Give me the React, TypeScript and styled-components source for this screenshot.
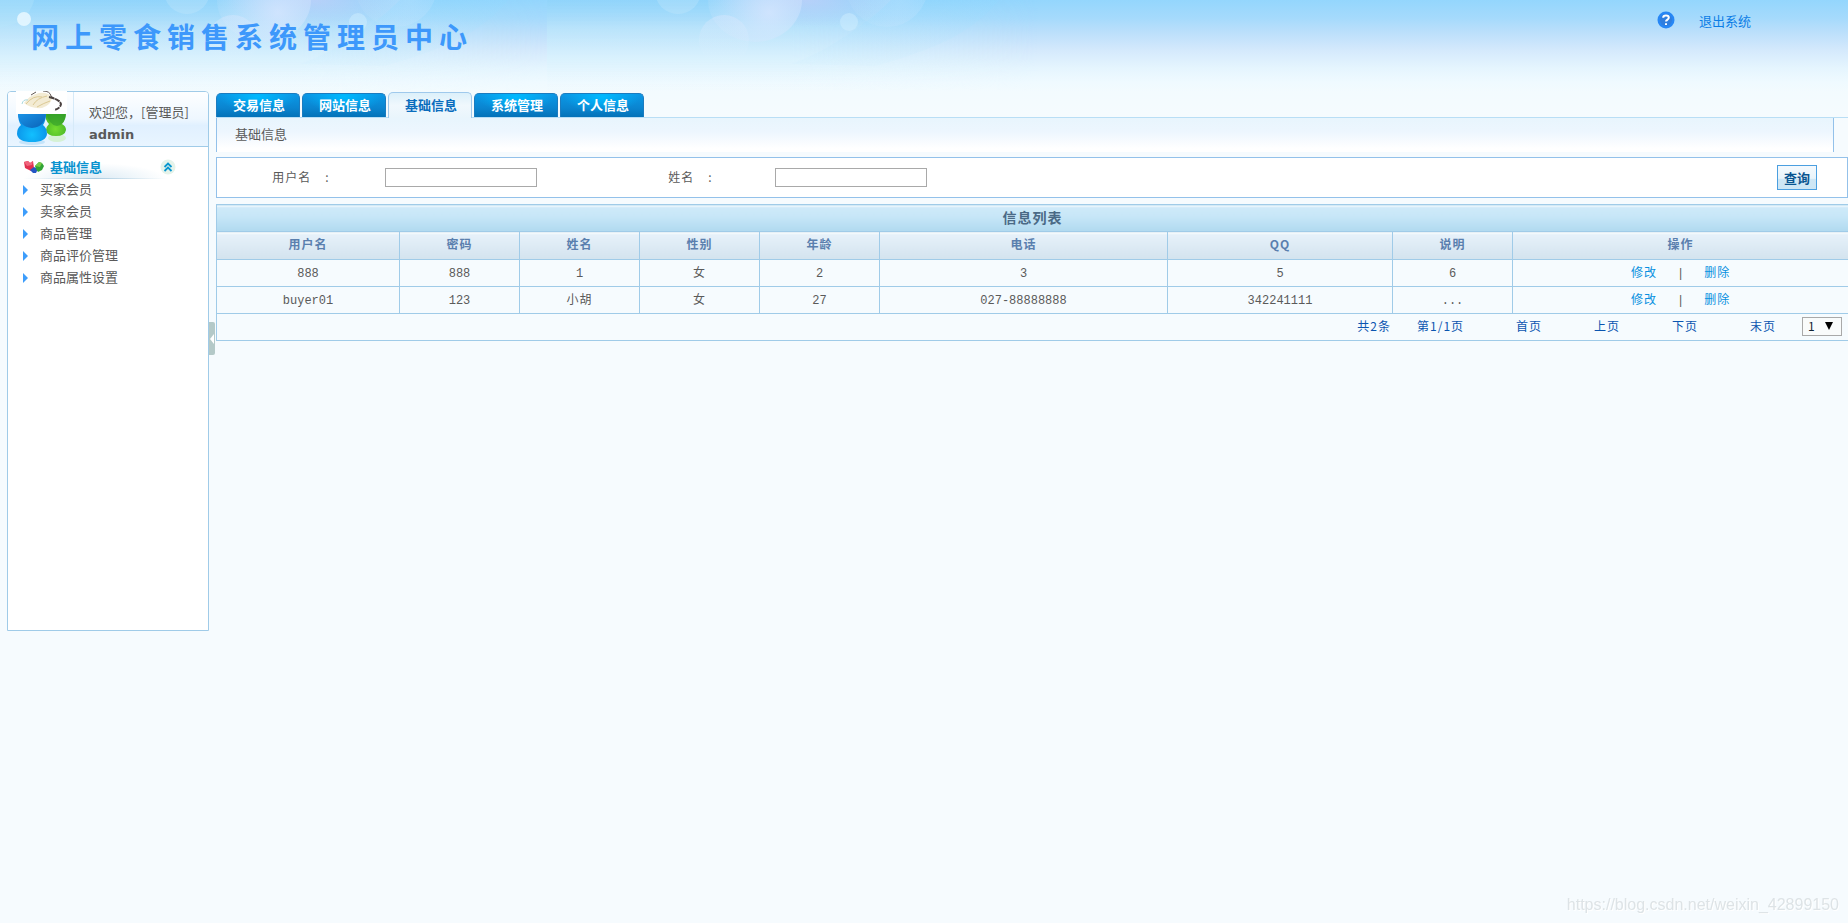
import React from "react";
import styled, { createGlobalStyle } from "styled-components";

const line = "#a0cbe8";
const edge = "#93c1ea";

const GlobalStyle = createGlobalStyle`
  *, *::before, *::after { box-sizing: border-box; }
  body {
    margin: 0;
    background: #f6fbfe;
    color: #5a5a5a;
    font: 12px/18px "Noto Sans CJK SC", sans-serif;
  }
  button, input, select { font: inherit; color: inherit; margin: 0; }
  a { text-decoration: none; color: inherit; }
  ul { list-style: none; margin: 0; padding: 0; }
`;

const Page = styled.div`
  min-height: 100vh;
  background: linear-gradient(180deg, #94d6fd 0, #a5dafc 18px, #bbdffb 32px, #d4e9fc 50px, #e5f5fe 68px, #effaff 82px, #f3fbfe 92px, #f6fbfe 124px) no-repeat;
`;

const Header = styled.header`
  position: relative;
  display: flex;
  justify-content: space-between;
  align-items: flex-start;
  height: 91px;
  padding: 8px 97px 0 31px;
  overflow: hidden;
`;

const Backdrop = styled.svg`
  position: absolute;
  left: 0;
  top: 0;
`;

const SiteTitle = styled.h1`
  position: relative;
  margin: 8px 0 0;
  font-size: 28px;
  line-height: 40px;
  font-weight: 700;
  letter-spacing: 6px;
  color: #3d98fb;
`;

const HeaderLinks = styled.nav`
  position: relative;
  display: flex;
  align-items: flex-start;
  gap: 24px;
  font-size: 13px;
  line-height: 26px;
  color: #0a7de6;
  svg { display: block; margin-top: 3px; }
`;

const Body = styled.div`
  display: flex;
  align-items: flex-start;
  padding-left: 7px;
`;

const Sidebar = styled.aside`
  width: 202px;
  min-height: 540px;
  flex: none;
  border: 1px solid ${line};
  border-radius: 4px 4px 0 0;
  background: #fff;
  font-size: 13px;
`;

const Welcome = styled.div`
  display: flex;
  height: 55px;
  border-bottom: 1px solid ${line};
  border-radius: 3px 3px 0 0;
  padding-left: 8px;
  background: linear-gradient(180deg, #fdfeff, #eef7ff 50%, #e0f0ff 62%, #e9f5ff);
  svg { margin-top: -1px; }
`;

const WelcomeText = styled.div`
  margin-left: 6px;
  padding: 10px 0 0 15px;
  border-left: 1px solid #d6eaf8;
  line-height: 20px;
  white-space: nowrap;
  strong { display: block; font-family: "DejaVu Sans", sans-serif; font-size: 13px; line-height: 26px; }
`;

const MenuHead = styled.div`
  display: flex;
  align-items: center;
  height: 24px;
  margin: 8px 32px 0 15px;
  color: #0a93cf;
  background:
    linear-gradient(90deg, #fff, #a9cbe0 50%, #fff) bottom left / 144px 1px no-repeat,
    radial-gradient(ellipse at 50% 100%, #dcebf5, #ffffff00 70%) bottom left / 144px 16px no-repeat;
  h2 { flex: 1; margin: 0 0 0 5px; font-size: 13px; line-height: 22px; }
`;

const Collapse = styled.button`
  display: flex;
  border: 0;
  padding: 0;
  background: none;
`;

const MenuList = styled.ul`
  margin-top: -1px;
`;

const MenuLink = styled.a`
  display: flex;
  align-items: center;
  gap: 11px;
  padding-left: 15px;
  line-height: 22px;
  svg { position: relative; top: 1px; }
`;

const Handle = styled.button`
  flex: none;
  width: 6px;
  height: 33px;
  margin: 231px 1px 0 0;
  padding: 0;
  border: 0;
  border-radius: 0 2px 2px 0;
  background: #b4c9c8;
  svg { display: block; }
`;

const Main = styled.main`
  flex: 1;
  min-width: 0;
`;

const Tabs = styled.nav`
  display: flex;
  align-items: flex-end;
  gap: 2px;
  height: 27px;
  border-bottom: 1px solid #b9def5;
`;

const Tab = styled.a<{ $active?: boolean }>`
  width: 84px;
  height: ${(p) => (p.$active ? 26 : 24)}px;
  margin-bottom: ${(p) => (p.$active ? -1 : 0)}px;
  padding-left: 2px;
  border: 1px solid ${(p) => (p.$active ? "#9fc9ec" : "#1b7cc0")};
  border-bottom: 0;
  border-radius: 5px 5px 0 0;
  background: ${(p) =>
    p.$active
      ? "linear-gradient(180deg, #dcf0fa, #f0f8fd 50%, #e9f5fc)"
      : "radial-gradient(ellipse 38px 16px at 50% 12%, #00baff, #00baff00), linear-gradient(180deg, #0b98e6, #0a85d0 60%, #0472b8)"};
  color: ${(p) => (p.$active ? "#0a6dbd" : "#fff")};
  font-size: 13px;
  font-weight: 700;
  line-height: ${(p) => (p.$active ? 23 : 21)}px;
  text-align: center;
`;

const Crumb = styled.div`
  height: 34px;
  margin-right: 14px;
  padding-left: 18px;
  border: solid ${edge};
  border-width: 0 1px;
  background: linear-gradient(180deg, #e8f5fd, #edf6fe 40%, #fff 90%);
  font-size: 13px;
  line-height: 32px;
`;

const Search = styled.form`
  display: grid;
  grid-template-columns: 168px 221px 169px 1fr auto;
  align-items: center;
  height: 41px;
  margin: 5px 0 6px;
  padding-right: 30px;
  border: 1px solid ${edge};
  background: #fff;
`;

const FieldLabel = styled.label`
  padding-bottom: 2px;
  text-align: center;
  letter-spacing: 1px;
  span { margin-left: 14px; }
`;

const TextBox = styled.input`
  width: 152px;
  height: 19px;
  padding: 0 2px;
  border: 1px solid #a9a9a9;
  border-radius: 0;
  background: #fff;
`;

const QueryButton = styled.button`
  width: 40px;
  height: 25px;
  padding: 0;
  border: 1px solid #4b9fe0;
  background: linear-gradient(180deg, #f4f9fd, #e9f4fa 54%, #cfe7f5 56%, #cde6f5);
  color: #0a5590;
  font-size: 13px;
  font-weight: 700;
  line-height: 20px;
`;

const Grid = styled.table`
  width: 100%;
  table-layout: fixed;
  border-collapse: collapse;
  border: 1px solid ${line};
  text-align: center;
  th, td { border: 1px solid ${line}; padding: 0; height: 27px; }
`;

const TitleCell = styled.th`
  && { padding-bottom: 2px; }
  background: linear-gradient(180deg, #fff 0, #cfeaf9 2px, #c6e6f7 45%, #b0d9ef);
  color: #4a6a86;
  font-size: 14px;
  letter-spacing: 1px;
`;

const HeadCell = styled.th`
  && { height: 28px; padding-bottom: 3px; }
  background: linear-gradient(180deg, #fff 0, #e6f1fa 2px, #d3e3ee);
  color: #5a7fae;
  letter-spacing: 1px;
`;

const Cell = styled.td<{ $han?: boolean }>`
  && { padding-top: 2px; }
  font-family: "Liberation Mono", "Noto Sans CJK SC", monospace;
  letter-spacing: ${(p) => (p.$han ? "1px" : "normal")};
`;

const Actions = styled.div`
  display: flex;
  justify-content: center;
  gap: 20px;
  a { color: #0790e0; letter-spacing: 1px; }
`;

const Pager = styled.div`
  display: flex;
  align-items: center;
  justify-content: flex-end;
  gap: 26px;
  padding: 0 6px 2px 0;
  color: #0b55b0;
  letter-spacing: 1px;
`;

const PageLinks = styled.nav`
  display: flex;
  gap: 52px;
  margin-left: 26px;
`;

const PagePick = styled.span`
  position: relative;
  display: flex;
  svg { position: absolute; right: 9px; top: 5px; pointer-events: none; }
`;

const PageSelect = styled.select`
  appearance: none;
  width: 40px;
  height: 19px;
  padding: 0 0 0 5px;
  border: 1px solid #a9a9a9;
  border-radius: 0;
  background: #f9fbfb;
  color: #123;
  line-height: 16px;
`;

const Watermark = styled.div`
  position: fixed;
  right: 9px;
  bottom: 8px;
  font: 16px/20px "Liberation Sans", sans-serif;
  color: #dde3e6;
  text-shadow: 1px 1px 0 #fff;
`;

const menu = ["买家会员", "卖家会员", "商品管理", "商品评价管理", "商品属性设置"];
const tabs = ["交易信息", "网站信息", "基础信息", "系统管理", "个人信息"];
const columns: [string, number][] = [
  ["用户名", 183], ["密码", 120], ["姓名", 120], ["性别", 120], ["年龄", 120],
  ["电话", 288], ["QQ", 225], ["说明", 120], ["操作", 336],
];
const rows = [
  ["888", "888", "1", "女", "2", "3", "5", "6"],
  ["buyer01", "123", "小胡", "女", "27", "027-88888888", "342241111", "..."],
];

const Bubbles = () => (
  <g>
    <circle cx="187" cy="-9" r="23" fill="#fff" opacity=".14" />
    <ellipse cx="264" cy="0" rx="47" ry="42" fill="url(#orb)" />
    <circle cx="233" cy="40" r="25" fill="url(#soft)" />
    <circle cx="358" cy="22" r="9" fill="#d3f0ff" opacity=".45" />
    <circle cx="396" cy="-14" r="41" fill="url(#orb)" opacity=".5" />
    <path d="M508 0C480 35 440 50 385 66L300 64C340 50 380 20 400 0Z" fill="url(#beam)" />
  </g>
);

const HeaderArt = () => (
  <Backdrop width="1040" height="91" aria-hidden="true">
    <defs>
      <radialGradient id="orb" cx=".65" cy=".65" r=".65">
        <stop offset="0" stopColor="#dbe8ff" stopOpacity=".75" />
        <stop offset="1" stopColor="#d0e6fc" stopOpacity=".15" />
      </radialGradient>
      <linearGradient id="soft" x1="0" y1="0" x2="0" y2="1">
        <stop offset="0" stopColor="#dde8fd" stopOpacity=".4" />
        <stop offset="1" stopColor="#dff2fd" stopOpacity="0" />
      </linearGradient>
      <linearGradient id="beam" x1="0" y1="0" x2="0" y2="1">
        <stop offset="0" stopColor="#8fd8ff" stopOpacity=".3" />
        <stop offset="1" stopColor="#c4eafe" stopOpacity=".1" />
      </linearGradient>
      <linearGradient id="aqua" x1="0" y1="0" x2="0" y2="1">
        <stop offset="0" stopColor="#8cd2f8" stopOpacity=".4" />
        <stop offset=".3" stopColor="#b9e4fb" stopOpacity=".8" />
        <stop offset=".65" stopColor="#d9f2fd" stopOpacity=".8" />
        <stop offset="1" stopColor="#effaff" stopOpacity="0" />
      </linearGradient>
      <radialGradient id="lilac">
        <stop offset="0" stopColor="#c3cff8" stopOpacity=".75" />
        <stop offset="1" stopColor="#c3cff8" stopOpacity="0" />
      </radialGradient>
      <linearGradient id="fade">
        <stop offset="0" stopColor="#fff" />
        <stop offset=".55" stopColor="#fff" />
        <stop offset="1" stopColor="#fff" stopOpacity="0" />
      </linearGradient>
      <mask id="tile"><rect width="547" height="91" fill="url(#fade)" /></mask>
      <clipPath id="second"><rect x="56" width="491" height="91" /></clipPath>
    </defs>
    <rect width="547" height="91" fill="url(#aqua)" mask="url(#tile)" />
    <g transform="translate(491 0)">
      <rect x="56" width="491" height="91" fill="url(#aqua)" mask="url(#tile)" />
    </g>
    <ellipse cx="315" cy="0" rx="90" ry="28" fill="url(#lilac)" />
    <ellipse cx="806" cy="0" rx="90" ry="28" fill="url(#lilac)" />
    <circle cx="0" cy="-8" r="35" fill="#b9e8fb" opacity=".3" />
    <circle cx="24" cy="19" r="7" fill="#e9f8ff" opacity=".85" />
    <Bubbles />
    <g transform="translate(491 0)" clipPath="url(#second)"><Bubbles /></g>
  </Backdrop>
);

const HelpIcon = () => (
  <svg width="18" height="18" viewBox="0 0 18 18">
    <circle cx="9" cy="9" r="8.5" fill="#2787f5" />
    <circle cx="9" cy="9" r="6" fill="#3578cf" opacity=".6" />
    <path d="M6.2 6.8C6.2 3.7 11.8 3.7 11.8 6.8C11.8 8.6 9 8.6 9 10.6M9 12.2V14" fill="none" stroke="#fff" strokeWidth="2" />
  </svg>
);

const Avatar = () => (
  <svg width="51" height="54" viewBox="0 0 51 54" aria-hidden="true">
    <defs>
      <radialGradient id="blue" cx=".5" cy=".75" r=".7">
        <stop offset="0" stopColor="#12c0ff" /><stop offset="1" stopColor="#0a86e2" />
      </radialGradient>
      <radialGradient id="green" cx=".5" cy=".7" r=".7">
        <stop offset="0" stopColor="#74dc30" /><stop offset="1" stopColor="#3fae25" />
      </radialGradient>
      <linearGradient id="head" x1="0" y1="0" x2="1" y2="1">
        <stop offset="0" stopColor="#1b95e8" /><stop offset="1" stopColor="#0a62b8" />
      </linearGradient>
    </defs>
    <ellipse cx="16" cy="51" rx="13" ry="3" fill="#c5e4fa" />
    <ellipse cx="41" cy="47" rx="9" ry="4" fill="#d5f1d4" />
    <path d="M29 22H50Q50 29 46 33Q50 35 50 39Q49 45 40 45Q31 45 30 39Q30 36 33 33Q29 29 29 22Z" fill="url(#green)" />
    <path d="M30 22H50Q49 34 41 35Q33 34 30 22Z" fill="#2e9a2c" opacity=".6" />
    <path d="M2 22H30Q30 30 27 34Q31 37 31 43Q30 51 16 51Q2 51 1 43Q1 37 5 34Q2 30 2 22Z" fill="url(#blue)" />
    <path d="M2 22H30Q29 36 16 37Q3 36 2 22Z" fill="url(#head)" />
    <rect width="51" height="23" fill="#fff" />
    <path d="M8 12Q14 4 23 2Q33 1 36 7Q35 14 26 17Q15 18 8 12Z" fill="#f3ebd3" />
    <path d="M10 13Q17 4 26 6M17 14Q21 7 31 5M21 16Q28 12 34 10" fill="none" stroke="#dcc994" />
    <path d="M6 13Q7 8 12 9" fill="none" stroke="#a9d9de" />
    <path d="M15 4L20 1M27 0Q34 0 35 5Q37 8 44 10" fill="none" stroke="#625955" />
    <path d="M33 6Q43 8 45 13Q44 18 38 19" fill="none" stroke="#4a4140" strokeWidth="2" strokeDasharray="5 1" />
  </svg>
);

const CubesIcon = () => (
  <svg width="22" height="15" viewBox="0 0 22 15" aria-hidden="true">
    <path d="M1 2L5 1L7 3L10 1L11 8L8 11L2 8Z" fill="#e0304f" />
    <path d="M1 2L5 1L7 3L10 1L9 5L4 6Z" fill="#f0647c" />
    <path d="M7 10L11 7L15 9L13 13L10 13Z" fill="#2456c4" />
    <path d="M12 6L16 2L19 3L21 6L19 10L15 12L13 9Z" fill="#31a436" />
    <path d="M12 6L16 2L19 3L17 7Z" fill="#79c945" />
  </svg>
);

const CollapseIcon = () => (
  <svg width="16" height="16" viewBox="0 0 16 16">
    <circle cx="8" cy="8" r="7.5" fill="#e5f3ea" />
    <path d="M4.5 8L8 4.5L11.5 8M4.5 12L8 8.5L11.5 12" fill="none" stroke="#0a97d0" strokeWidth="1.8" />
  </svg>
);

export default function App() {
  return (
    <Page>
      <GlobalStyle />
      <Header>
        <HeaderArt />
        <SiteTitle>网上零食销售系统管理员中心</SiteTitle>
        <HeaderLinks>
          <a href="#help" aria-label="?"><HelpIcon /></a>
          <a href="#logout">退出系统</a>
        </HeaderLinks>
      </Header>
      <Body>
        <Sidebar>
          <Welcome>
            <Avatar />
            <WelcomeText>欢迎您，[管理员]<strong>admin</strong></WelcomeText>
          </Welcome>
          <MenuHead>
            <CubesIcon />
            <h2>基础信息</h2>
            <Collapse type="button" aria-label="基础信息"><CollapseIcon /></Collapse>
          </MenuHead>
          <MenuList>
            {menu.map((m) => (
              <li key={m}>
                <MenuLink href="#menu">
                  <svg width="6" height="10" viewBox="0 0 6 10"><path d="M0 0L5 5L0 10Z" fill="#3d9dfb" /></svg>
                  {m}
                </MenuLink>
              </li>
            ))}
          </MenuList>
        </Sidebar>
        <Handle type="button" aria-label="◀">
          <svg width="6" height="10" viewBox="0 0 6 10"><path d="M5 0V10L1 5Z" fill="#fff" /></svg>
        </Handle>
        <Main>
          <Tabs>
            {tabs.map((t, i) => <Tab key={t} href="#tab" $active={i === 2}>{t}</Tab>)}
          </Tabs>
          <Crumb>基础信息</Crumb>
          <Search onSubmit={(e) => e.preventDefault()}>
            <FieldLabel htmlFor="user">用户名<span>:</span></FieldLabel>
            <TextBox id="user" />
            <FieldLabel htmlFor="name">姓名<span>:</span></FieldLabel>
            <TextBox id="name" />
            <QueryButton>查询</QueryButton>
          </Search>
          <Grid>
            <colgroup>
              {columns.map(([c, w]) => <col key={c} width={w} />)}
            </colgroup>
            <thead>
              <tr><TitleCell colSpan={9}>信息列表</TitleCell></tr>
              <tr>{columns.map(([c]) => <HeadCell key={c}>{c}</HeadCell>)}</tr>
            </thead>
            <tbody>
              {rows.map((r) => (
                <tr key={r[0]}>
                  {r.map((v, i) => <Cell key={i} $han={/[\u4e00-\u9fff]/.test(v)}>{v}</Cell>)}
                  <Cell>
                    <Actions><a href="#edit">修改</a><span>|</span><a href="#delete">删除</a></Actions>
                  </Cell>
                </tr>
              ))}
            </tbody>
            <tfoot>
              <tr>
                <td colSpan={9}>
                  <Pager>
                    <span>共2条</span>
                    <span>第1/1页</span>
                    <PageLinks>
                      {["首页", "上页", "下页", "末页"].map((p) => <a key={p} href="#page">{p}</a>)}
                    </PageLinks>
                    <PagePick>
                      <PageSelect aria-label="第1/1页"><option>1</option></PageSelect>
                      <svg width="8" height="8" viewBox="0 0 8 8"><path d="M0 0H8L4 8Z" fill="#000" /></svg>
                    </PagePick>
                  </Pager>
                </td>
              </tr>
            </tfoot>
          </Grid>
        </Main>
      </Body>
      <Watermark>https://blog.csdn.net/weixin_42899150</Watermark>
    </Page>
  );
}
